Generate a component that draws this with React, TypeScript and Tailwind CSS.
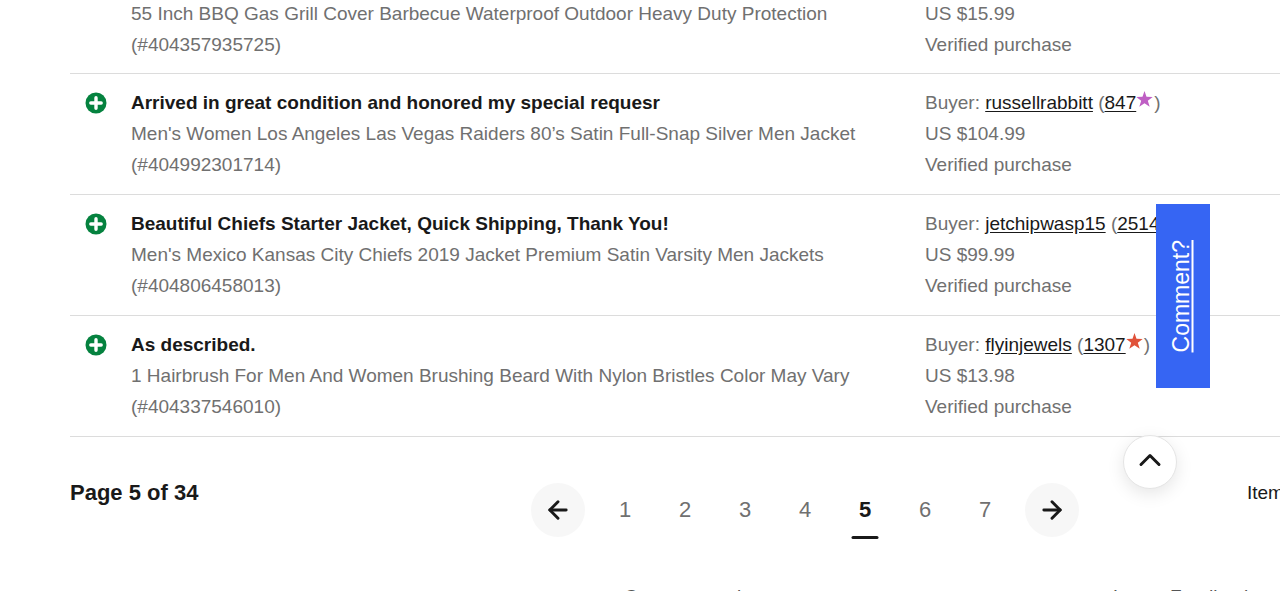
import { ArrowLeft, ArrowRight, ChevronUp } from "lucide-react";

type Feedback = {
  comment?: string;
  item: string;
  itemId: string;
  buyer?: string;
  score?: number;
  star?: string;
  price: string;
};

const FEEDBACK: Feedback[] = [
  {
    item: "55 Inch BBQ Gas Grill Cover Barbecue Waterproof Outdoor Heavy Duty Protection",
    itemId: "404357935725",
    price: "US $15.99",
  },
  {
    comment: "Arrived in great condition and honored my special requesr",
    item: "Men's Women Los Angeles Las Vegas Raiders 80’s Satin Full-Snap Silver Men Jacket",
    itemId: "404992301714",
    buyer: "russellrabbitt",
    score: 847,
    star: "text-[#bf5fc4]",
    price: "US $104.99",
  },
  {
    comment: "Beautiful Chiefs Starter Jacket, Quick Shipping, Thank You!",
    item: "Men's Mexico Kansas City Chiefs 2019 Jacket Premium Satin Varsity Men Jackets",
    itemId: "404806458013",
    buyer: "jetchipwasp15",
    score: 2514,
    star: "text-[#e0523a]",
    price: "US $99.99",
  },
  {
    comment: "As described.",
    item: "1 Hairbrush For Men And Women Brushing Beard With Nylon Bristles Color May Vary",
    itemId: "404337546010",
    buyer: "flyinjewels",
    score: 1307,
    star: "text-[#e0523a]",
    price: "US $13.98",
  },
];

const PAGES = [1, 2, 3, 4, 5, 6, 7];
const CURRENT_PAGE = 5;

function PositiveIcon() {
  return (
    <svg viewBox="0 0 22 22" className="w-[22px] h-[22px]" role="img" aria-label="Positive feedback">
      <circle cx="11" cy="11" r="10.5" fill="#05823f" />
      <path d="M11 5.8v10.4M5.800 11h10.4" stroke="#fff" strokeWidth="3.4" strokeLinecap="round" />
    </svg>
  );
}

function StarIcon({ className }: { className?: string }) {
  return (
    <svg viewBox="0 0 18 21" className={`inline-block w-[18px] h-[21px] align-baseline ${className ?? ""}`} aria-hidden="true">
      <path d="M8.500 3l2 5.800 6.200.1-4.900 3.800 1.900 6-5.200-3.500-5.200 3.500 1.900-6L.3 8.900l6.200-.1z" fill="currentColor" />
    </svg>
  );
}

function FeedbackRow({ row }: { row: Feedback }) {
  const pad = row.comment ? "pt-[13px] pb-3.5" : "pb-[13px]";

  return (
    <tr className="border-b border-[#dcdcdc] align-top">
      <td className={`${pad} pl-[15px]`}>
        {row.comment && (
          <div className="h-[31px] flex items-center">
            <PositiveIcon />
          </div>
        )}
      </td>
      <td className={pad}>
        {row.comment && <p className="font-bold text-[#191919]">{row.comment}</p>}
        <p>{row.item}</p>
        <p>(#{row.itemId})</p>
      </td>
      <td className={`${pad} whitespace-nowrap`}>
        {row.buyer && (
          <p className="h-[31px]">
            Buyer:{" "}
            <a href="#buyer" className="text-[#191919] underline underline-offset-2">{row.buyer}</a>
            {" ("}
            <a href="#score" className="text-[#191919] underline underline-offset-2">{row.score}</a>
            <StarIcon className={row.star} />
            )
          </p>
        )}
        <p>{row.price}</p>
        <p>Verified purchase</p>
      </td>
    </tr>
  );
}

export default function App() {
  return (
    <div className="relative h-screen overflow-hidden bg-white pl-[70px] font-['Liberation_Sans',Arial,sans-serif] text-[19px] leading-[31px] text-[#707070]">
      <table className="w-full -mt-0.5 table-fixed border-collapse">
        <colgroup>
          <col className="w-[61px]" />
          <col />
          <col className="w-[355px]" />
        </colgroup>
        <tbody>
          {FEEDBACK.map((row) => (
            <FeedbackRow key={row.itemId} row={row} />
          ))}
        </tbody>
      </table>

      {/* Pagination */}
      <div className="flex items-start pt-10">
        <h2 className="flex-1 text-[22px] font-bold text-[#191919]">Page 5 of 34</h2>
        <nav aria-label="Pagination" className="flex items-center pt-1.5">
          <button type="button" aria-label="Previous page" className="w-[54px] h-[54px] mr-2.5 rounded-full bg-[#f7f7f7] text-[#191919] flex items-center justify-center">
            <ArrowLeft size={28} strokeWidth={2.5} />
          </button>
          {PAGES.map((page) => (
            <a
              key={page}
              href={`#page-${page}`}
              aria-current={page === CURRENT_PAGE ? "page" : undefined}
              className={`relative w-[60px] pb-0.5 text-center text-[22px] ${page === CURRENT_PAGE ? "font-bold text-[#191919]" : ""}`}
            >
              {page}
              {page === CURRENT_PAGE && (
                <span className="absolute left-1/2 -bottom-3 w-[27px] h-[3px] -translate-x-1/2 rounded-full bg-[#191919]" />
              )}
            </a>
          ))}
          <button type="button" aria-label="Next page" className="w-[54px] h-[54px] ml-2.5 rounded-full bg-[#f7f7f7] text-[#191919] flex items-center justify-center">
            <ArrowRight size={28} strokeWidth={2.5} />
          </button>
        </nav>
        <div className="w-[201px] pl-[168px] whitespace-nowrap text-[#191919]">Item</div>
      </div>

      {/* Footer links */}
      <div className="flex justify-end pt-11 whitespace-nowrap text-[#555]">
        <a href="#contact-members" className="w-[489px]">Contact members</a>
        <a href="#leave-feedback" className="w-[167px]">Leave Feedback</a>
      </div>

      <a
        href="#comment"
        className="absolute top-[204px] right-[70px] w-[54px] h-[184px] pr-1 flex items-center justify-center bg-[#3665f3] text-[23px] text-white underline underline-offset-3 [writing-mode:sideways-lr]"
      >
        Comment?
      </a>
      <button
        type="button"
        aria-label="Back to top"
        className="absolute top-[435px] right-[103px] w-[54px] h-[54px] pb-1 rounded-full border border-[#e5e5e5] bg-white text-[#191919] shadow-[0_5px_17px_rgba(0,0,0,0.1)] flex items-center justify-center"
      >
        <ChevronUp size={36} strokeWidth={2} />
      </button>
    </div>
  );
}
